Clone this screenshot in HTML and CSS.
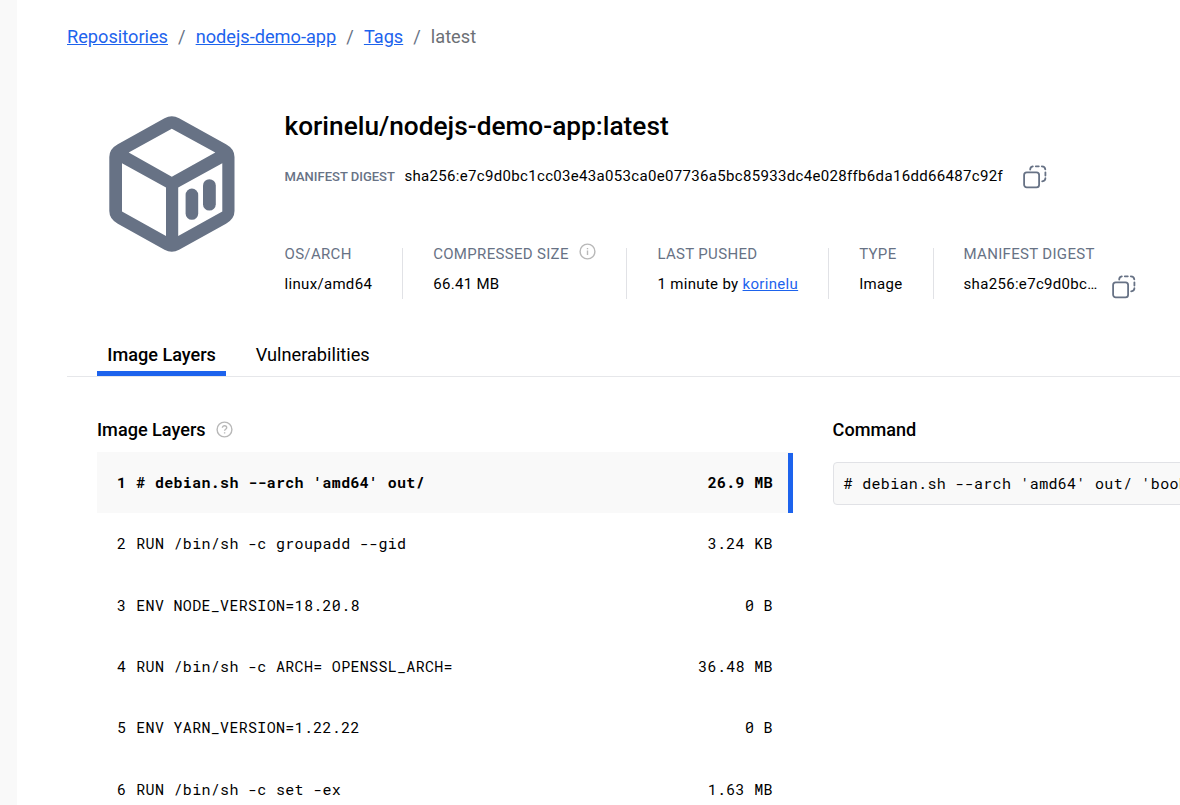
FILE: index.html
```html
<!DOCTYPE html>
<html lang="en">
<head>
<meta charset="utf-8">
<title>korinelu/nodejs-demo-app:latest</title>
<link rel="stylesheet" href="styles.css">
</head>
<body>
<svg class="defs" width="0" height="0">
  <symbol id="copy" viewBox="0 0 24 24">
    <rect x="1.1" y="7.4" width="15" height="15" rx="2.6"/>
    <path d="M7.2 4.6C7.2 2.6 7.8 1.8 9.8 1.4M12.8 1.3h3M18.8 1.3c2.4 0 3.3.8 3.5 3M22.4 7.3v3.2M22.4 13.2c0 1.9-1 2.9-3.2 3.1"/>
  </symbol>
</svg>
<div class="page">
  <aside class="rail"></aside>
  <main class="main">
    <nav class="crumbs">
      <a href="#">Repositories</a><span>/</span><a href="#">nodejs-demo-app</a><span>/</span><a href="#">Tags</a><span>/</span><b>latest</b>
    </nav>

    <header class="summary">
      <svg class="cube" width="126" height="138" viewBox="109 115 126 138">
        <path fill-rule="evenodd" d="M164.5 118.3Q171.8 114.3 179.1 118.3L226 144.3Q234.5 149 234.5 157V211Q234.5 219 226 223.7L179.1 249.7Q171.8 253.7 164.5 249.7L117.8 223.7Q109.3 219 109.3 211V157Q109.3 149 117.8 144.3ZM171.8 128.7L128.7 152.5L171.8 176.7L215.3 152.5ZM122 163.3V211.5L166 236V187.4ZM178.2 187.4V236L222.3 211.5V163.3Z"/>
        <rect x="185.6" y="188.6" width="12.6" height="31.2" rx="6.3"/>
        <rect x="203" y="179.2" width="12.8" height="31.4" rx="6.4"/>
      </svg>
      <div class="info">
        <h1>korinelu/nodejs-demo-app:latest</h1>
        <div class="digest">
          <span class="digest-label">MANIFEST DIGEST</span>
          <span class="digest-value">sha256:e7c9d0bc1cc03e43a053ca0e07736a5bc85933dc4e028ffb6da16dd66487c92f</span>
          <svg class="copy" width="24" height="24"><use href="#copy"/></svg>
        </div>
        <div class="facts">
          <div class="fact"><div class="label">OS/ARCH</div><div class="value">linux/amd64</div></div>
          <div class="fact">
            <div class="label">COMPRESSED SIZE
              <svg class="hint" width="17" height="17" viewBox="0 0 17 17"><circle cx="8.5" cy="8.5" r="7.4"/><path d="M8.5 7.6v4.3M8.5 4.9v1.4"/></svg>
            </div>
            <div class="value">66.41 MB</div>
          </div>
          <div class="fact"><div class="label">LAST PUSHED</div><div class="value">1 minute by <a href="#">korinelu</a></div></div>
          <div class="fact"><div class="label">TYPE</div><div class="value">Image</div></div>
          <div class="fact">
            <div class="label">MANIFEST DIGEST</div>
            <div class="value short">sha256:e7c9d0bc…<svg class="copy" width="24" height="24"><use href="#copy"/></svg></div>
          </div>
        </div>
      </div>
    </header>

    <div class="tabs"><div class="tab active">Image Layers</div><div class="tab">Vulnerabilities</div></div>

    <div class="columns">
      <section class="layers">
        <h2>Image Layers
          <svg class="hint" width="17" height="17" viewBox="0 0 17 17"><circle cx="8.5" cy="8.5" r="7.4"/><path d="M6.4 6.8c0-2.8 4.3-2.7 4.3 0 0 1.5-2.1 1.5-2.1 3M8.6 11.2v1.4"/></svg>
        </h2>
        <ol>
          <li class="current"><i>1</i><span># debian.sh --arch 'amd64' out/</span><em>26.9 MB</em></li>
          <li><i>2</i><span>RUN /bin/sh -c groupadd --gid</span><em>3.24 KB</em></li>
          <li><i>3</i><span>ENV NODE_VERSION=18.20.8</span><em>0 B</em></li>
          <li><i>4</i><span>RUN /bin/sh -c ARCH= OPENSSL_ARCH=</span><em>36.48 MB</em></li>
          <li><i>5</i><span>ENV YARN_VERSION=1.22.22</span><em>0 B</em></li>
          <li><i>6</i><span>RUN /bin/sh -c set -ex</span><em>1.63 MB</em></li>
        </ol>
      </section>
      <section class="command">
        <h2>Command</h2>
        <pre># debian.sh --arch 'amd64' out/ 'bookworm'</pre>
      </section>
    </div>
  </main>
</div>
</body>
</html>
```
FILE: styles.css
```css
* { box-sizing: border-box; }
body {
  margin: 0;
  background: #fff;
  color: #000;
  font: 15px/20px Roboto, sans-serif;
  overflow: hidden;
}
a { color: #1d63ed; text-decoration: underline; }
h1, h2, ol, pre { margin: 0; padding: 0; }
.defs { position: absolute; }
.page { display: flex; height: 805px; overflow: hidden; }
.rail { flex: none; width: 17px; background: #f9f9f9; }
.main { flex: 1; min-width: 0; padding-left: 50px; }

.crumbs {
  display: flex;
  padding-top: 25px;
  font-size: 18.2px;
  line-height: 24px;
  color: #677285;
}
.crumbs span { margin: 0 10.05px; }
.crumbs b { font-weight: 400; color: #6c7075; }

.summary { display: flex; padding: 60px 0 0 42px; height: 291px; }
.cube { flex: none; margin: 6px 49.5px 0 0; fill: #677285; }
.info { min-width: 0; }
h1 { font-size: 26.25px; line-height: 34px; font-weight: 500; }
.digest { display: flex; align-items: center; height: 24px; margin-top: 21px; }
.digest-label { font-size: 13px; font-weight: 500; color: #677285; margin-right: 9.5px; padding-top: 1px; }
.digest-value { letter-spacing: .325px; margin-right: 20.4px; }
.copy { flex: none; fill: none; stroke: #677285; stroke-width: 1.8; stroke-linecap: round; }
.digest .copy { margin-top: 1px; }
.facts { display: flex; margin-top: 60px; height: 51px; letter-spacing: .32px; white-space: nowrap; }
.fact { padding-right: 30px; margin-right: 30px; border-right: 1px solid #e1e2e6; }
.fact:last-child { border: 0; }
.label { display: flex; height: 20px; margin-top: -4px; color: #677285; }
.value { margin-top: 10px; }
.hint { fill: none; stroke: #b8b8b8; stroke-width: 1.4; }
.label .hint { margin: -1px 0 0 10.7px; }
.short { display: flex; }
.short .copy { margin: 1px 0 0 14px; }

.tabs { display: flex; height: 37px; padding-left: 30px; border-bottom: 1px solid #e6e7ea; font-size: 18.2px; line-height: 30px; }
.tab { height: 36px; padding: 0 10.3px; margin-right: 19.2px; }
.tab.active { font-weight: 500; border-bottom: 5px solid #1d63ed; font-size: 18.1px; }

.columns { display: flex; padding-left: 30px; }
h2 { display: flex; align-items: center; gap: 10px; height: 24px; font-size: 18.1px; font-weight: 500; margin-top: 41px; }
h2 .hint { margin-top: -1px; }
.layers { flex: none; width: 696px; margin-right: 39.6px; }
ol { list-style: none; margin-top: 10px; }
li, pre { font: 15px/20px "Roboto Mono", "DejaVu Sans Mono", monospace; letter-spacing: .31px; white-space: pre; }
li { display: flex; align-items: center; height: 61.4px; padding: 0 20.2px 2px 20px; }
li i, li em { font-style: normal; }
li i { margin-right: 10px; }
li em { margin-left: auto; }
.current {
  height: 61px;
  margin-bottom: .6px;
  background: linear-gradient(#1d63ed, #1d63ed) right 1px / 5px 60px no-repeat, #f9f9f9;
  font-weight: 700;
}
.command { flex: none; width: 500px; }
pre { height: 43px; margin-top: 20px; padding: 10px 10px; background: #f9f9f9; border: 1px solid #e1e2e6; border-radius: 4px; }
```
